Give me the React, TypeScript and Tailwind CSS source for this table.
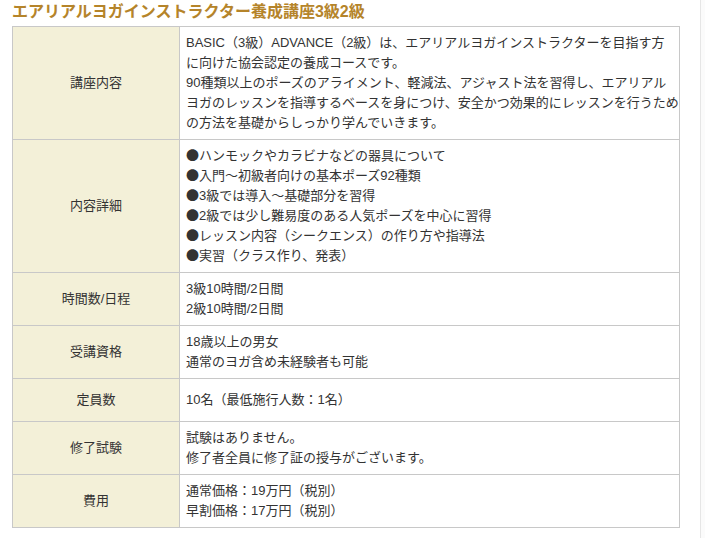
const rows: { label: string; lines: string[] }[] = [
    {
        label: '講座内容',
        lines: [
            'BASIC（3級）ADVANCE（2級）は、エアリアルヨガインストラクターを目指す方',
            'に向けた協会認定の養成コースです。',
            '90種類以上のポーズのアライメント、軽減法、アジャスト法を習得し、エアリアル',
            'ヨガのレッスンを指導するベースを身につけ、安全かつ効果的にレッスンを行うため',
            'の方法を基礎からしっかり学んでいきます。',
        ],
    },
    {
        label: '内容詳細',
        lines: [
            '●ハンモックやカラビナなどの器具について',
            '●入門〜初級者向けの基本ポーズ92種類',
            '●3級では導入〜基礎部分を習得',
            '●2級では少し難易度のある人気ポーズを中心に習得',
            '●レッスン内容（シークエンス）の作り方や指導法',
            '●実習（クラス作り、発表）',
        ],
    },
    { label: '時間数/日程', lines: ['3級10時間/2日間', '2級10時間/2日間'] },
    { label: '受講資格', lines: ['18歳以上の男女', '通常のヨガ含め未経験者も可能'] },
    { label: '定員数', lines: ['10名（最低施行人数：1名）'] },
    { label: '修了試験', lines: ['試験はありません。', '修了者全員に修了証の授与がございます。'] },
    { label: '費用', lines: ['通常価格：19万円（税別）', '早割価格：17万円（税別）'] },
];

function Line({ text }: { text: string }) {
    // the bullet needs the CJK font to come out full width
    if (text.startsWith('●')) {
        return (
            <div className="h-5 whitespace-nowrap">
                <span
                    className="leading-none"
                    style={{ fontFamily: '"Noto Sans CJK JP", sans-serif' }}
                >
                    ●
                </span>
                {text.slice(1)}
            </div>
        );
    }
    return <div className="h-5 whitespace-nowrap">{text}</div>;
}

export default function App() {
    return (
        <div
            className="flex w-[705px] h-[538px] bg-white text-[#333]"
            style={{ fontFamily: '"Liberation Sans", "Noto Sans CJK JP", sans-serif' }}
        >
            <div className="w-[700px] pl-3">
                <h1 className="text-[16px] leading-6 font-bold text-[#b5842a]">
                    エアリアルヨガインストラクター養成講座3級2級
                </h1>
                <table className="mt-[2px] w-[668px] table-fixed border-collapse border border-[#c8c8c8] text-[13px] leading-5">
                    <colgroup>
                        <col className="w-[167px]" />
                        <col />
                    </colgroup>
                    <tbody>
                        {rows.map((row) => (
                            <tr key={row.label}>
                                <th className="border border-[#c8c8c8] bg-[#f3f0d8] py-[11px] font-normal text-center align-middle">
                                    {row.label}
                                </th>
                                <td className="border border-[#c8c8c8] pl-[6px] pr-2 py-[6px]">
                                    {row.lines.map((line, i) => (
                                        <Line key={i} text={line} />
                                    ))}
                                </td>
                            </tr>
                        ))}
                    </tbody>
                </table>
            </div>
            <div className="flex-1 border-l border-[#e6e6e6] bg-[#fbfbfb]" />
        </div>
    );
}
